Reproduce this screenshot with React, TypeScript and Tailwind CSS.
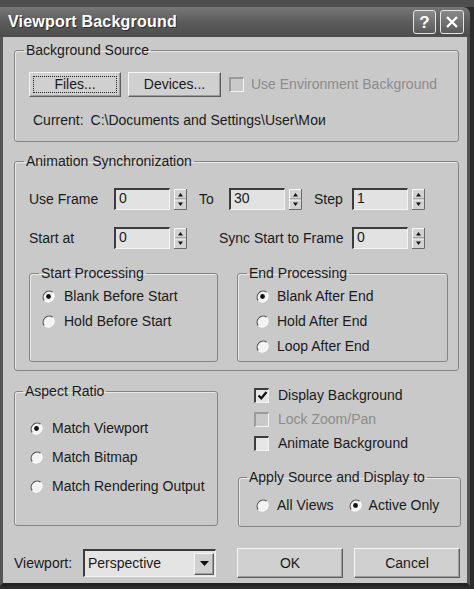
import React from 'react';

const sunken =
  'border-t-2 border-l-2 border-b border-r border-t-[#3c3c3c] border-l-[#3c3c3c] border-b-[#f4f4f4] border-r-[#f4f4f4]';
const raised =
  'border border-t-[#f6f6f6] border-l-[#f6f6f6] border-b-[#5e5e5e] border-r-[#5e5e5e] shadow-[inset_-1px_-1px_0_#9c9c9c] bg-[#d0d0d0]';
const group = 'border border-[#858585] rounded-[3px] shadow-[inset_1px_1px_0_#e8e8e8]';

function Radio({ checked }: { checked?: boolean }) {
  return (
    <svg width="13" height="13" viewBox="0 0 13 13" className="shrink-0">
      <circle cx="6.5" cy="6.5" r="6" fill="#f3f3f3" />
      <path d="M2.3 10.7 A6 6 0 0 1 10.7 2.3" stroke="#5a5a5a" strokeWidth="1.3" fill="none" />
      <path d="M10.7 2.3 A6 6 0 0 1 2.3 10.7" stroke="#ffffff" strokeWidth="1" fill="none" />
      {checked && <circle cx="6.5" cy="6.5" r="2.4" fill="#111" />}
    </svg>
  );
}

function Check({ checked, disabled }: { checked?: boolean; disabled?: boolean }) {
  return (
    <span
      className={`w-[15px] h-[15px] shrink-0 flex items-center justify-center ${sunken} ${
        disabled ? 'bg-[#c9c9c9] border-t-[#9a9a9a] border-l-[#9a9a9a]' : 'bg-[#e6e6e6]'
      }`}
    >
      {checked && (
        <svg width="11" height="11" viewBox="0 0 11 11">
          <path d="M1.5 5.5 L4.3 8.3 L9.5 2" stroke="#111" strokeWidth="2.2" fill="none" />
        </svg>
      )}
    </span>
  );
}

function Arrows() {
  return (
    <svg width="13" height="21" viewBox="0 0 13 21" className="ml-[4px] shrink-0">
      <rect x="0" y="0" width="13" height="21" fill="#d2d2d2" />
      <path d="M0.5 20 V0.5 H12" stroke="#fafafa" fill="none" />
      <path d="M0 20.5 H12.5 V0" stroke="#6a6a6a" fill="none" />
      <path d="M1 10 H12" stroke="#7a7a7a" />
      <path d="M1 11 H12" stroke="#fafafa" />
      <path d="M4 7.5 L6.5 4 L9 7.5 Z" fill="#111" />
      <path d="M4 13.5 L9 13.5 L6.5 17 Z" fill="#111" />
    </svg>
  );
}

function Spinner({ value }: { value: string }) {
  return (
    <div className="flex items-center">
      <div className={`w-[56px] h-[22px] bg-[#e2e2e2] pl-[3px] leading-[17px] ${sunken}`}>{value}</div>
      <Arrows />
    </div>
  );
}

function Legend({ children, ml = 'ml-[9px]' }: { children: React.ReactNode; ml?: string }) {
  return <legend className={`${ml} px-[2px] leading-[16px]`}>{children}</legend>;
}

function RadioRow({ label, checked, gap, h }: { label: string; checked?: boolean; gap: string; h: string }) {
  return (
    <div className={`flex items-center ${h}`}>
      <Radio checked={checked} />
      <span className={gap}>{label}</span>
    </div>
  );
}

function TitleBar() {
  return (
    <div className="h-[30px] shrink-0 rounded-tr-[7px] bg-linear-to-b from-[#777777] via-[#5c5c5c] to-[#4c4c4c] flex items-center pl-[8px] pr-[6px]">
      <span className="text-white font-bold text-[16px] tracking-[0.2px] [text-shadow:1px_1px_0_#2e2e2e]">Viewport Background</span>
      <div className="ml-auto flex gap-[4px]">
        <div className="w-[23px] h-[24px] rounded-[3px] border border-[#e4e4e4] bg-linear-to-b from-[#8a8a8a] to-[#5a5a5a] flex items-center justify-center text-white font-bold text-[17px] leading-none">
          ?
        </div>
        <div className="w-[24px] h-[24px] rounded-[3px] border border-[#e4e4e4] bg-linear-to-b from-[#8a8a8a] to-[#5a5a5a] flex items-center justify-center">
          <svg width="14" height="14" viewBox="0 0 14 14">
            <path d="M2 2 L12 12 M12 2 L2 12" stroke="#fff" strokeWidth="2.4" />
          </svg>
        </div>
      </div>
    </div>
  );
}

export default function App() {
  return (
    <div className="w-[474px] h-[589px] overflow-hidden bg-[#2c2c2c] font-['Liberation_Sans',Arial,sans-serif] text-[14px] text-[#1a1a1a] flex flex-col">
      <div className="h-[7px] shrink-0 bg-[#4e4e4e]" />
      <div className="w-[470px] flex flex-col">
        <TitleBar />
        <div className="h-[549px] border-l-[3px] border-r-[3px] border-b-[3px] border-l-[#555555] border-r-[#555555] border-b-[#222222] bg-[#c9c9c9] pl-[11px] flex flex-col">
          {/* Background Source */}
          <fieldset className={`mt-[5px] w-[445px] h-[100px] ${group}`}>
            <Legend>Background Source</Legend>
            <div className="pl-[14px]">
              <div className="mt-[14px] h-[25px] flex items-center">
                <div className={`w-[92px] h-[25px] p-[3px] ${raised}`}>
                  <div className="h-full border border-dotted border-[#222] flex items-center justify-center">Files...</div>
                </div>
                <div className={`ml-[7px] w-[93px] h-[25px] flex items-center justify-center ${raised}`}>Devices...</div>
                <span className="ml-[8px]">
                  <Check disabled />
                </span>
                <span className="ml-[7px] text-[#8c8c8c]">Use Environment Background</span>
              </div>
              <div className="mt-[15px] pl-[4px] leading-[16px] flex">
                <span>Current:</span>
                <span className="ml-[7px]">C:\Documents and Settings\User\Мои</span>
              </div>
            </div>
          </fieldset>

          {/* Animation Synchronization */}
          <fieldset className={`mt-[11px] w-[445px] h-[218px] ${group}`}>
            <Legend>Animation Synchronization</Legend>
            <div className="pl-[14px]">
              <div className="mt-[19px] h-[22px] flex items-center">
                <span className="w-[85px]">Use Frame</span>
                <Spinner value="0" />
                <span className="ml-[12px] w-[30px]">To</span>
                <Spinner value="30" />
                <span className="ml-[12px] w-[38px]">Step</span>
                <Spinner value="1" />
              </div>
              <div className="mt-[17px] h-[22px] flex items-center">
                <span className="w-[85px]">Start at</span>
                <Spinner value="0" />
                <span className="ml-[32px] w-[133px]">Sync Start to Frame</span>
                <Spinner value="0" />
              </div>
              <div className="mt-[16px] flex gap-[19px]">
                <fieldset className={`w-[189px] h-[97px] ${group}`}>
                  <Legend>Start Processing</Legend>
                  <div className="pl-[12px] mt-[3px]">
                    <RadioRow label="Blank Before Start" checked gap="ml-[9px]" h="h-[25px]" />
                    <RadioRow label="Hold Before Start" gap="ml-[9px]" h="h-[25px]" />
                  </div>
                </fieldset>
                <fieldset className={`w-[211px] h-[97px] ${group}`}>
                  <Legend>End Processing</Legend>
                  <div className="pl-[18px] mt-[3px]">
                    <RadioRow label="Blank After End" checked gap="ml-[8px]" h="h-[25px]" />
                    <RadioRow label="Hold After End" gap="ml-[8px]" h="h-[25px]" />
                    <RadioRow label="Loop After End" gap="ml-[8px]" h="h-[25px]" />
                  </div>
                </fieldset>
              </div>
            </div>
          </fieldset>

          <div className="mt-[12px] flex gap-[20px]">
            {/* Aspect Ratio */}
            <fieldset className={`w-[204px] h-[143px] ${group}`}>
              <Legend ml="ml-[8px]">Aspect Ratio</Legend>
              <div className="pl-[15px] mt-[15px]">
                <RadioRow label="Match Viewport" checked gap="ml-[9px]" h="h-[29px]" />
                <RadioRow label="Match Bitmap" gap="ml-[9px]" h="h-[29px]" />
                <RadioRow label="Match Rendering Output" gap="ml-[9px]" h="h-[29px]" />
              </div>
            </fieldset>

            <div className="w-[223px] flex flex-col">
              <div className="h-[24px] pl-[16px] flex items-center">
                <Check checked />
                <span className="ml-[9px]">Display Background</span>
              </div>
              <div className="h-[24px] pl-[16px] flex items-center">
                <Check disabled />
                <span className="ml-[9px] text-[#8c8c8c]">Lock Zoom/Pan</span>
              </div>
              <div className="h-[25px] pl-[16px] flex items-center">
                <Check />
                <span className="ml-[9px]">Animate Background</span>
              </div>
              <fieldset className={`mt-[13px] w-[223px] h-[58px] ${group}`}>
                <Legend ml="ml-[8px]">Apply Source and Display to</Legend>
                <div className="mt-[8px] h-[24px] pl-[17px] flex items-center">
                  <Radio />
                  <span className="ml-[8px]">All Views</span>
                  <span className="ml-[15px]">
                    <Radio checked />
                  </span>
                  <span className="ml-[7px]">Active Only</span>
                </div>
              </fieldset>
            </div>
          </div>

          {/* Bottom row */}
          <div className="mt-[21px] h-[30px] flex items-center">
            <span className="w-[69px]">Viewport:</span>
            <div className={`w-[133px] h-[28px] bg-[#e4e4e4] flex items-center pl-[3px] pr-[1px] ${sunken}`}>
              <span>Perspective</span>
              <div className={`ml-auto w-[20px] h-[22px] flex items-center justify-center ${raised}`}>
                <svg width="9" height="5" viewBox="0 0 9 5">
                  <path d="M0 0 H9 L4.5 5 Z" fill="#111" />
                </svg>
              </div>
            </div>
            <div className={`ml-[21px] w-[106px] h-[30px] flex items-center justify-center ${raised}`}>OK</div>
            <div className={`ml-[11px] w-[106px] h-[30px] flex items-center justify-center ${raised}`}>Cancel</div>
          </div>
        </div>
      </div>
    </div>
  );
}
